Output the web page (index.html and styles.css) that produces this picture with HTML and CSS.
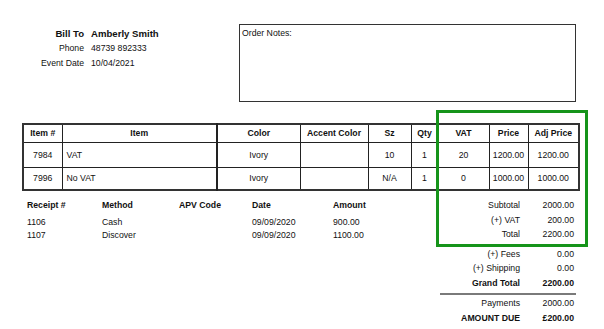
FILE: index.html
```html
<!DOCTYPE html>
<html>
<head>
<meta charset="utf-8">
<link rel="stylesheet" href="styles.css">
</head>
<body>
<div class="page">
  <div class="top">
    <div class="bill">
      <div class="lbl strong">Bill To</div><div class="val strong">Amberly Smith</div>
      <div class="lbl">Phone</div><div class="val">48739 892333</div>
      <div class="lbl">Event Date</div><div class="val">10/04/2021</div>
    </div>
    <div class="notes">Order Notes:</div>
  </div>

  <table class="items">
    <colgroup>
      <col class="c-num"><col class="c-item"><col class="c-color"><col class="c-accent"><col class="c-sz"><col class="c-qty"><col class="c-vat"><col class="c-price"><col class="c-adj">
    </colgroup>
    <thead>
      <tr class="head"><th>Item #</th><th>Item</th><th>Color</th><th>Accent Color</th><th>Sz</th><th>Qty</th><th>VAT</th><th>Price</th><th>Adj Price</th></tr>
    </thead>
    <tbody>
      <tr class="r1"><td>7984</td><td class="left">VAT</td><td>Ivory</td><td></td><td>10</td><td>1</td><td>20</td><td>1200.00</td><td>1200.00</td></tr>
      <tr class="r2"><td>7996</td><td class="left">No VAT</td><td>Ivory</td><td></td><td>N/A</td><td>1</td><td>0</td><td>1000.00</td><td>1000.00</td></tr>
    </tbody>
  </table>

  <div class="bottom">
    <div class="receipts">
      <div class="rh">Receipt #</div><div class="rh">Method</div><div class="rh">APV Code</div><div class="rh">Date</div><div class="rh">Amount</div>
      <div class="rc">1106</div><div class="rc">Cash</div><div class="rc"></div><div class="rc">09/09/2020</div><div class="rc">900.00</div>
      <div class="rc">1107</div><div class="rc">Discover</div><div class="rc"></div><div class="rc">09/09/2020</div><div class="rc">1100.00</div>
    </div>
    <div class="totals">
      <div class="tgroup">
        <div class="tl">Subtotal</div><div class="tv">2000.00</div>
        <div class="tl">(+) VAT</div><div class="tv">200.00</div>
        <div class="tl">Total</div><div class="tv">2200.00</div>
      </div>
      <div class="tgroup second">
        <div class="tl">(+) Fees</div><div class="tv">0.00</div>
        <div class="tl">(+) Shipping</div><div class="tv">0.00</div>
        <div class="tl strong">Grand Total</div><div class="tv strong">2200.00</div>
      </div>
      <div class="rule"></div>
      <div class="tgroup">
        <div class="tl">Payments</div><div class="tv">2000.00</div>
        <div class="tl strong">AMOUNT DUE</div><div class="tv strong">£200.00</div>
      </div>
    </div>
  </div>

  <div class="highlight"></div>
</div>
</body>
</html>
```
FILE: styles.css
```css
html, body {
  margin: 0;
  padding: 0;
  background: #fff;
}
body {
  font-family: "Liberation Sans", Arial, sans-serif;
  font-size: 8.7px;
  color: #111;
}
.page {
  position: relative;
  width: 604px;
  height: 329px;
  overflow: hidden;
}
.strong { font-weight: bold; }

.top {
  display: flex;
  padding-top: 24px;
}
.bill {
  width: 239px;
  display: grid;
  grid-template-columns: 84px auto;
  column-gap: 7px;
  align-content: start;
  padding-top: 1.5px;
  line-height: 15px;
}
.bill .lbl { text-align: right; }
.bill .strong { font-size: 9.6px; }
.notes {
  box-sizing: border-box;
  width: 337px;
  height: 78px;
  border: 1px solid #333;
  padding: 2px 2px;
  line-height: 13px;
}

.items {
  margin: 21px 0 0 22px;
  border-collapse: collapse;
  table-layout: fixed;
  width: 556px;
  border: 2px solid #333;
}
.items th, .items td {
  border: 1px solid #222;
  text-align: center;
  padding: 0;
  white-space: nowrap;
}
.items th { font-weight: bold; }
.items td.left { text-align: left; padding-left: 4px; }
.items .head { height: 18px; }
.items .r1 { height: 25px; }
.items .r2 { height: 23px; }
.c-num { width: 39px; }
.c-item { width: 155px; }
.c-color { width: 83px; }
.c-accent { width: 68px; }
.c-sz { width: 43px; }
.c-qty { width: 27px; }
.c-vat { width: 51px; }
.c-price { width: 39px; }
.c-adj { width: 51px; }
.items th:nth-child(2), .items td:nth-child(2) { border-right-width: 2px; }

.bottom {
  display: flex;
  margin-top: 6px;
}
.receipts {
  padding-left: 27px;
  display: grid;
  grid-template-columns: 75px 77px 73px 81px 80px;
  grid-template-rows: 17px 13px 14px;
  line-height: 14px;
  align-items: start;
  align-content: start;
  padding-top: 0.5px;
}
.rh { font-weight: bold; }
.totals {
  margin-left: auto;
  margin-right: 28px;
  width: 136px;
  padding-top: 1px;
}
.tgroup {
  display: grid;
  grid-template-columns: 80px 56px;
  line-height: 14.5px;
}
.tgroup.second { margin-top: 5.25px; }
.tl { text-align: right; }
.tv { text-align: right; padding-right: 2px; }
.rule {
  height: 2px;
  background: #7a7a7a;
  margin: 3px 0 1px 0;
}

.highlight {
  position: absolute;
  left: 436px;
  top: 110px;
  width: 152px;
  height: 137px;
  box-sizing: border-box;
  border: 3px solid #16941a;
}
```
